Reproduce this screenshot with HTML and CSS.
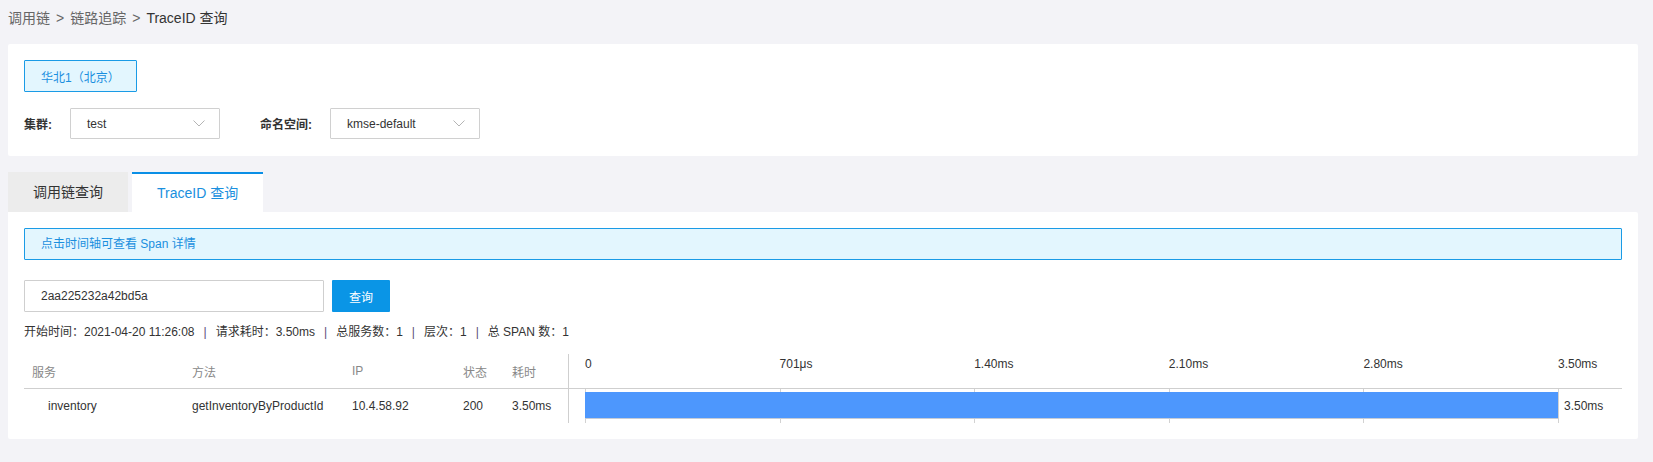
FILE: index.html
```html
<!DOCTYPE html>
<html lang="zh-CN">
<head>
<meta charset="utf-8">
<title>TraceID 查询</title>
<link rel="stylesheet" href="styles.css">
</head>
<body>
<div class="page">
  <div class="breadcrumb">
    <span class="crumb">调用链</span><span class="crumb-sep">&gt;</span><span class="crumb">链路追踪</span><span class="crumb-sep">&gt;</span><span class="crumb current">TraceID 查询</span>
  </div>

  <div class="panel filter-panel">
    <div class="region-row">
      <button class="region-btn">华北1（北京）</button>
    </div>
    <div class="filter-row">
      <label class="filter-label">集群:</label>
      <div class="select">
        <span class="select-value">test</span>
        <svg class="chevron" width="12" height="7" viewBox="0 0 12 7"><polyline points="0.5,0.5 6,6 11.5,0.5" fill="none" stroke="#b4b4b4" stroke-width="1"/></svg>
      </div>
      <label class="filter-label ns-label">命名空间:</label>
      <div class="select">
        <span class="select-value">kmse-default</span>
        <svg class="chevron" width="12" height="7" viewBox="0 0 12 7"><polyline points="0.5,0.5 6,6 11.5,0.5" fill="none" stroke="#b4b4b4" stroke-width="1"/></svg>
      </div>
    </div>
  </div>

  <div class="tabs">
    <div class="tab">调用链查询</div>
    <div class="tab active">TraceID 查询</div>
  </div>

  <div class="panel content-panel">
    <div class="alert">点击时间轴可查看 Span 详情</div>
    <div class="search-row">
      <div class="input">2aa225232a42bd5a</div>
      <button class="btn-primary">查询</button>
    </div>
    <div class="summary">
      <span>开始时间：2021-04-20 11:26:08</span><span class="sep">|</span><span>请求耗时：3.50ms</span><span class="sep">|</span><span>总服务数：1</span><span class="sep">|</span><span>层次：1</span><span class="sep">|</span><span>总 SPAN 数：1</span>
    </div>

    <div class="trace-table">
      <div class="trow thead">
        <div class="cell c-svc">服务</div>
        <div class="cell c-method">方法</div>
        <div class="cell c-ip">IP</div>
        <div class="cell c-status">状态</div>
        <div class="cell c-dur">耗时</div>
        <div class="timeline">
          <div class="scale-labels">
            <span>0</span><span>701μs</span><span>1.40ms</span><span>2.10ms</span><span>2.80ms</span><span>3.50ms</span>
          </div>
        </div>
      </div>
      <div class="trow tbody">
        <div class="cell c-svc svc-name">inventory</div>
        <div class="cell c-method">getInventoryByProductId</div>
        <div class="cell c-ip">10.4.58.92</div>
        <div class="cell c-status">200</div>
        <div class="cell c-dur">3.50ms</div>
        <div class="timeline">
          <div class="scale-grid">
            <div class="tick t1"></div><div class="tick t2"></div><div class="tick t3"></div><div class="tick t4"></div><div class="tick t5"></div>
            <div class="tick t6 end-label">3.50ms</div>
            <div class="bar" style="width: 100%"></div>
          </div>
        </div>
      </div>
    </div>
  </div>
</div>
</body>
</html>
```

FILE: styles.css
```css
* { box-sizing: border-box; }
html, body {
  margin: 0;
  padding: 0;
  background: #f3f3f7;
}
body {
  font-family: "Liberation Sans", Arial, "Noto Sans CJK SC", sans-serif;
  font-size: 12px;
  color: #333;
}
.page {
  padding: 8px 15px 0 8px;
}

/* breadcrumb */
.breadcrumb {
  height: 20px;
  line-height: 20px;
  font-size: 14px;
  color: #666;
  display: flex;
  align-items: center;
}
.crumb-sep {
  margin: 0 6px;
  color: #666;
}
.crumb.current { color: #333; }

/* panels */
.panel {
  background: #fff;
  border-radius: 2px;
}
.filter-panel {
  margin-top: 16px;
  padding: 16px 16px 17px;
}
.region-row { display: flex; }
.region-btn {
  height: 32px;
  width: 113px;
  padding: 0 0 0 16px;
  text-align: left;
  background: #e3f6fe;
  border: 1px solid #1a9be6;
  border-radius: 1px;
  color: #1a8fde;
  font-family: inherit;
  font-size: 12px;
}
.filter-row {
  display: flex;
  align-items: center;
  margin-top: 16px;
  height: 31px;
}
.filter-label {
  font-weight: bold;
  color: #333;
  width: 46px;
  font-size: 12px;
}
.ns-label {
  margin-left: 40px;
  width: 70px;
}
.select {
  width: 150px;
  height: 31px;
  border: 1px solid #d0d0d0;
  border-radius: 1px;
  display: flex;
  align-items: center;
  justify-content: space-between;
  padding: 0 14px 0 16px;
  color: #333;
}
.chevron { display: block; }

/* tabs */
.tabs {
  display: flex;
  gap: 4px;
  margin-top: 16px;
  height: 40px;
}
.tab {
  height: 40px;
  line-height: 40px;
  padding: 0 25px;
  background: #ececec;
  font-size: 14px;
  color: #333;
}
.tab.active {
  background: #fff;
  color: #1a8fde;
  border-top: 2px solid #0a8fe6;
  line-height: 38px;
}

/* content */
.content-panel {
  padding: 16px 16px 16px;
  border-radius: 0 2px 2px 2px;
}
.alert {
  height: 32px;
  line-height: 30px;
  background: #e3f6fe;
  border: 1px solid #1a9be6;
  border-radius: 1px;
  padding: 0 16px;
  color: #1a8fde;
  font-size: 12px;
}
.search-row {
  display: flex;
  gap: 8px;
  margin-top: 20px;
}
.input {
  width: 300px;
  height: 32px;
  line-height: 30px;
  border: 1px solid #cfcfcf;
  border-radius: 1px;
  padding: 0 16px;
  color: #333;
}
.btn-primary {
  width: 58px;
  height: 32px;
  background: #0a95e6;
  border: none;
  border-radius: 1px;
  color: #fff;
  font-family: inherit;
  font-size: 12px;
}
.summary {
  margin-top: 10px;
  height: 20px;
  line-height: 20px;
  color: #333;
  display: flex;
}
.summary .sep {
  margin: 0 9px;
  color: #5b4a7a;
}

/* table */
.trace-table {
  margin-top: 12px;
}
.trow {
  display: flex;
}
.thead {
  height: 35px;
  border-bottom: 1px solid #cfcfcf;
  color: #888;
}
.tbody {
  height: 34px;
}
.cell {
  display: flex;
  align-items: center;
  padding-left: 8px;
  white-space: nowrap;
}
.c-svc { width: 160px; }
.c-method { width: 160px; }
.c-ip { width: 111px; }
.c-status { width: 49px; }
.c-dur {
  width: 65px;
  border-right: 1px solid #cfcfcf;
}
.svc-name { padding-left: 24px; }
.tbody .cell { color: #333; }

.timeline {
  flex: 1;
  padding: 0 0 0 16px;
}
.scale-labels {
  display: grid;
  grid-template-columns: repeat(5, 1fr) 64px;
  height: 100%;
  color: #333;
  padding-top: 1px;
}
.scale-labels span {
  line-height: 18px;
}
.scale-grid {
  display: grid;
  grid-template-columns: repeat(5, 1fr) 64px;
  grid-template-rows: 100%;
  height: 100%;
}
.tick {
  grid-row: 1;
  border-left: 1px solid #d2d2d2;
}
.t1 { grid-column: 1; }
.t2 { grid-column: 2; }
.t3 { grid-column: 3; }
.t4 { grid-column: 4; }
.t5 { grid-column: 5; }
.t6 { grid-column: 6; }
.end-label {
  display: flex;
  align-items: center;
  padding-left: 5px;
  color: #333;
}
.bar {
  grid-row: 1;
  grid-column: 1 / 6;
  align-self: start;
  margin-top: 3px;
  height: 27px;
  background: #4d97fd;
  border-bottom: 1px solid #c6ccd6;
}
```
